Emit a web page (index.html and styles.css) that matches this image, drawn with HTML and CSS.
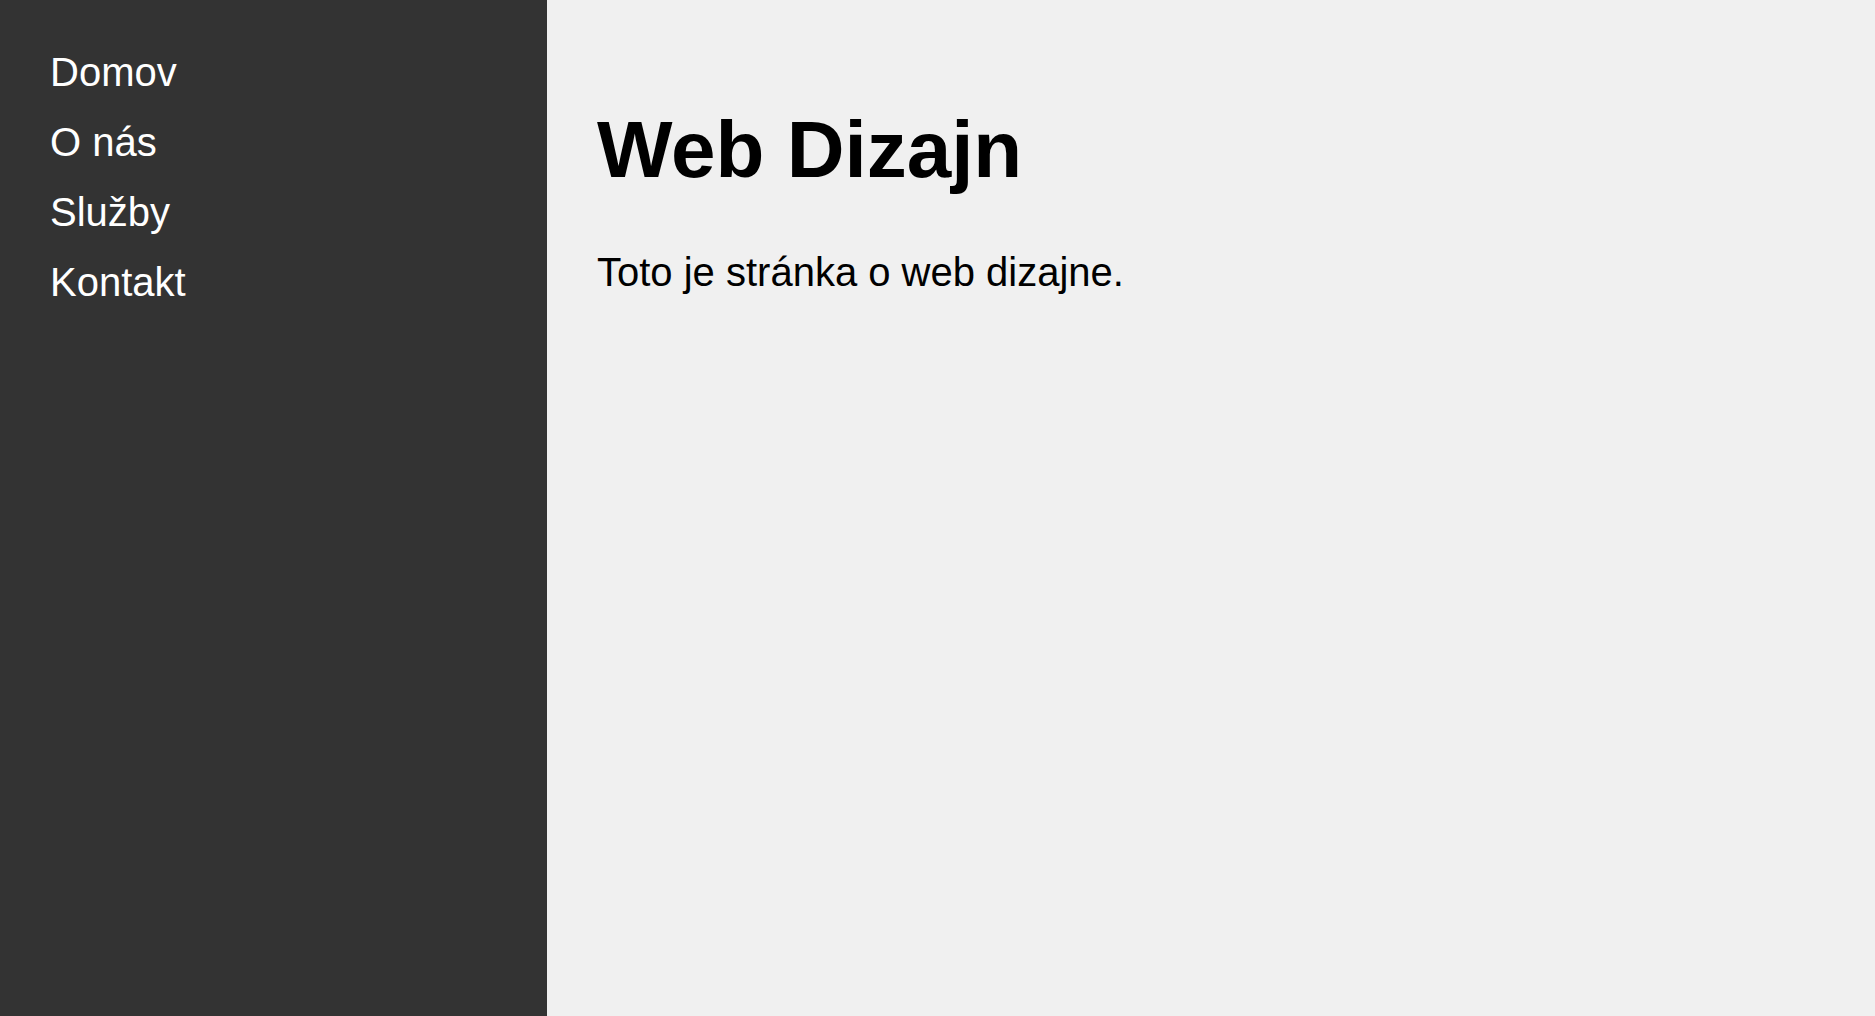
FILE: index.html
```html
<!DOCTYPE html>
<html lang="sk">
<head>
<meta charset="utf-8">
<title>Web Dizajn</title>
<link rel="stylesheet" href="styles.css">
</head>
<body>
<div class="layout">
  <nav class="sidebar">
    <ul class="menu">
      <li><a href="#">Domov</a></li>
      <li><a href="#">O nás</a></li>
      <li><a href="#">Služby</a></li>
      <li><a href="#">Kontakt</a></li>
    </ul>
  </nav>
  <main class="content">
    <h1 class="title">Web Dizajn</h1>
    <p class="text">Toto je stránka o web dizajne.</p>
  </main>
</div>
</body>
</html>
```
FILE: styles.css
```css
html, body {
  margin: 0;
  padding: 0;
  height: 100%;
}
body {
  font-family: "Liberation Sans", Arial, sans-serif;
  font-size: 40px;
  background: #f0f0f0;
  color: #000;
}
.layout {
  display: flex;
  min-height: 100vh;
}
.sidebar {
  width: 547px;
  flex: 0 0 547px;
  background: #333333;
  box-sizing: border-box;
  padding: 37px 50px 0;
}
.menu {
  list-style: none;
  margin: 0;
  padding: 0;
}
.menu li {
  line-height: 70px;
}
.menu a {
  color: #ffffff;
  text-decoration: none;
}
.content {
  flex: 1;
  padding: 50px;
  background: #f0f0f0;
}
.title {
  font-size: 80px;
  font-weight: bold;
  margin: 53.6px 0;
}
.text {
  margin: 0;
  line-height: 46px;
}
```
